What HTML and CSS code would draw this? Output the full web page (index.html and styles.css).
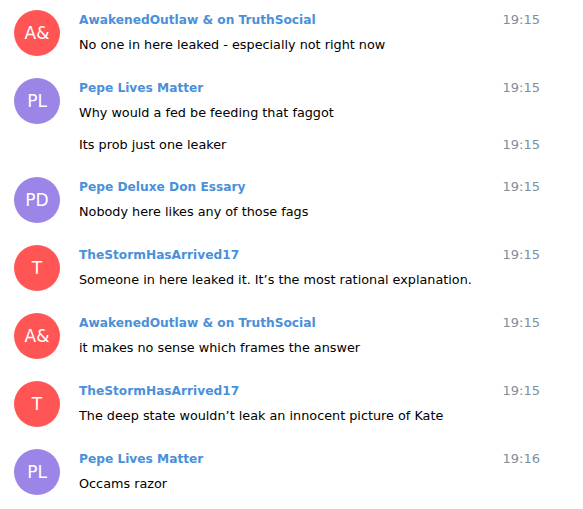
FILE: index.html
```html
<!DOCTYPE html>
<html>
<head>
<meta charset="utf-8">
<link rel="stylesheet" href="styles.css">
</head>
<body>
<div class="history">
  <div class="group">
    <div class="avatar red">A&amp;</div>
    <div class="body">
      <div class="head"><span class="name">AwakenedOutlaw &amp; on TruthSocial</span><span class="time">19:15</span></div>
      <div class="text">No one in here leaked - especially not right now</div>
    </div>
  </div>
  <div class="group">
    <div class="avatar purple">PL</div>
    <div class="body">
      <div class="head"><span class="name">Pepe Lives Matter</span><span class="time">19:15</span></div>
      <div class="text">Why would a fed be feeding that faggot</div>
      <div class="row"><span class="text">Its prob just one leaker</span><span class="time">19:15</span></div>
    </div>
  </div>
  <div class="group">
    <div class="avatar purple">PD</div>
    <div class="body">
      <div class="head"><span class="name">Pepe Deluxe Don Essary</span><span class="time">19:15</span></div>
      <div class="text">Nobody here likes any of those fags</div>
    </div>
  </div>
  <div class="group">
    <div class="avatar red">T</div>
    <div class="body">
      <div class="head"><span class="name">TheStormHasArrived17</span><span class="time">19:15</span></div>
      <div class="text">Someone in here leaked it. It’s the most rational explanation.</div>
    </div>
  </div>
  <div class="group">
    <div class="avatar red">A&amp;</div>
    <div class="body">
      <div class="head"><span class="name">AwakenedOutlaw &amp; on TruthSocial</span><span class="time">19:15</span></div>
      <div class="text">it makes no sense which frames the answer</div>
    </div>
  </div>
  <div class="group">
    <div class="avatar red">T</div>
    <div class="body">
      <div class="head"><span class="name">TheStormHasArrived17</span><span class="time">19:15</span></div>
      <div class="text">The deep state wouldn’t leak an innocent picture of Kate</div>
    </div>
  </div>
  <div class="group">
    <div class="avatar purple">PL</div>
    <div class="body">
      <div class="head"><span class="name">Pepe Lives Matter</span><span class="time">19:16</span></div>
      <div class="text">Occams razor</div>
    </div>
  </div>
</div>
</body>
</html>
```

FILE: styles.css
```css
html, body {
  margin: 0;
  padding: 0;
  background: #ffffff;
}
body {
  font-family: "DejaVu Sans", Verdana, sans-serif;
  font-size: 12.8px;
  color: #000000;
}
.history {
  display: flex;
  flex-direction: column;
  gap: 22px;
  padding: 10px 43px 0 14px;
}
.group {
  display: flex;
  gap: 19px;
  align-items: flex-start;
}
.avatar {
  flex: none;
  width: 46px;
  height: 46px;
  border-radius: 50%;
  color: #ffffff;
  font-size: 17px;
  display: flex;
  align-items: center;
  justify-content: center;
}
.red { background: #ff5555; }
.purple { background: #9b85e6; }
.body {
  flex: 1;
  display: flex;
  flex-direction: column;
}
.head, .row {
  display: flex;
  justify-content: space-between;
  align-items: center;
  line-height: 20px;
}
.row { margin-top: 12px; }
.name {
  color: #4a90d9;
  font-weight: bold;
  font-size: 12.2px;
}
.time {
  color: #7d8e9e;
  font-size: 13px;
}
.text {
  line-height: 20px;
}
.head + .text { margin-top: 5px; }
```
